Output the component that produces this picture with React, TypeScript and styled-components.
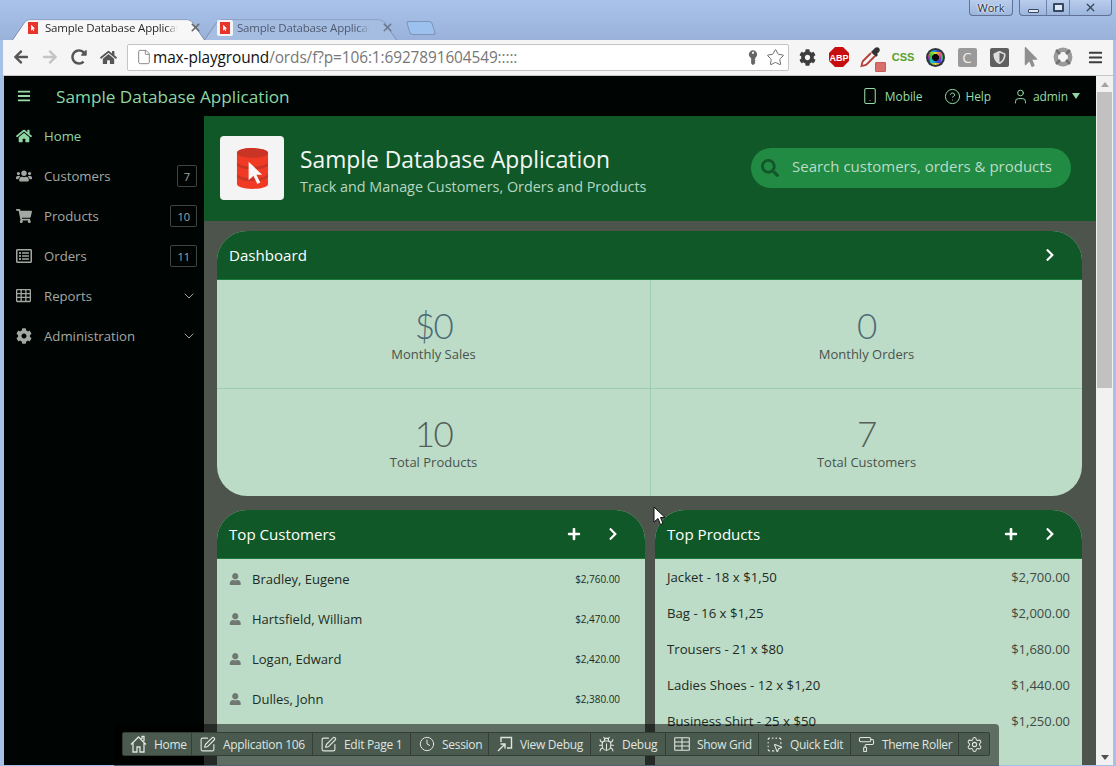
import React from 'react';
import styled, { createGlobalStyle } from 'styled-components';
import {
  FaArrowLeft, FaArrowRight, FaBars, FaChevronRight, FaCog, FaHome, FaKey, FaMousePointer,
  FaPlus, FaRedoAlt, FaRegListAlt, FaSearch, FaShieldAlt, FaShoppingCart, FaUser, FaUsers,
} from 'react-icons/fa';
import {
  Bug, ChevronDown, CircleHelp, Clock, File, PaintRoller, Settings, Smartphone,
  SquareDashedMousePointer, SquarePen, Star, User, X,
} from 'lucide-react';

const GlobalStyle = createGlobalStyle`
  html, body { margin: 0; padding: 0; overflow: hidden; background: #a7c1e6; }
  * { box-sizing: border-box; }
`;

const Frame = styled.div`
  position: relative;
  width: 1116px;
  height: 766px;
  overflow: hidden;
  display: flex;
  flex-direction: column;
  font-family: "Open Sans", "Noto Sans", sans-serif;
  background: #a7c1e6;
`;

/* browser chrome */
const TitleBar = styled.div`
  height: 40px;
  flex: none;
  display: flex;
  justify-content: space-between;
  padding: 0 4px 0 12px;
  background: linear-gradient(#a9c3ea, #9ab2da);
`;

const TabStrip = styled.div`
  display: flex;
  align-items: flex-end;
`;

const Tab = styled.div<{ $active?: boolean }>`
  position: relative;
  width: 193px;
  height: 25px;
  margin-right: -1px;
  padding: 0 3px 0 16px;
  display: flex;
  align-items: center;
  gap: 7px;
  font-size: 11.5px;
  letter-spacing: -0.2px;
  white-space: nowrap;
  z-index: ${(p) => (p.$active ? 2 : 1)};
  color: ${(p) => (p.$active ? '#2b2b2b' : '#4f5a70')};
  &::before {
    content: '';
    position: absolute;
    inset: 0;
    z-index: -1;
    border: 1px solid #7b8cab;
    border-bottom: none;
    border-radius: 5px 5px 0 0;
    background: ${(p) => (p.$active ? '#f7f7f7' : '#a6bde2')};
    transform: perspective(40px) rotateX(16deg);
    transform-origin: bottom;
  }
`;

const TabTitle = styled.span`
  flex: 1;
  -webkit-mask-image: linear-gradient(90deg, #000 88%, transparent 97%);
  mask-image: linear-gradient(90deg, #000 88%, transparent 97%);
`;

const Favicon = styled.span`
  width: 10px;
  height: 12px;
  flex: none;
  display: flex;
  align-items: center;
  justify-content: center;
  background: #e8352b;
  color: #fff;
  font-size: 6px;
`;

const FaviconBox = styled.span`
  width: 16px;
  height: 16px;
  margin: 0 -3px;
  flex: none;
  display: flex;
  align-items: center;
  justify-content: center;
  background: #f5f5f5;
  border-radius: 2px;
`;

const NewTab = styled.div`
  width: 26px;
  height: 14px;
  margin: 0 0 5px 12px;
  border: 1px solid #7f93b8;
  border-radius: 3px;
  background: #9cc1ee;
  transform: skewX(18deg);
`;

const WindowButtons = styled.div`
  display: flex;
  align-items: flex-start;
  gap: 6px;
`;

const CaptionGroup = styled.div`
  height: 16px;
  display: flex;
  border: 1px solid #5f7295;
  border-top: none;
  border-radius: 0 0 4px 4px;
  background: linear-gradient(#b9cdec, #9db6dd);
`;

const CaptionButton = styled.div<{ $width: number }>`
  width: ${(p) => p.$width}px;
  display: flex;
  align-items: center;
  justify-content: center;
  color: #1f2a3a;
  font-size: 11px;
  text-shadow: 0 0 2px #fff, 0 0 2px #fff;
  border-right: 1px solid #6f83a6;
  &:last-child { border-right: none; }
`;

const MinGlyph = styled.span`
  width: 11px;
  height: 4px;
  margin-top: 6px;
  border: 1px solid #384860;
  border-radius: 1px;
  background: #dfe8f5;
`;

const MaxGlyph = styled.span`
  width: 11px;
  height: 9px;
  border: 2px solid #384860;
  border-radius: 1px;
  background: #dfe8f5;
`;

const BrowserBar = styled.div`
  height: 36px;
  flex: none;
  display: flex;
  align-items: center;
  margin: 0 3px;
  padding: 0 0 1px;
  background: #f5f5f5;
  border-bottom: 1px solid #c8c8c8;
`;

const NavIcons = styled.div`
  width: 124px;
  flex: none;
  padding-left: 10px;
  display: flex;
  align-items: center;
  gap: 13px;
  color: #555;
  font-size: 16px;
`;

const FadedIcon = styled.span`
  display: flex;
  color: #c4c4c4;
`;

const Omnibox = styled.div`
  width: 662px;
  height: 27px;
  flex: none;
  padding: 0 3px 0 8px;
  display: flex;
  align-items: center;
  background: #fff;
  border: 1px solid #c4c4c4;
  border-radius: 2px;
  font-size: 15.4px;
  letter-spacing: -0.1px;
  color: #111;
`;

const UrlRest = styled.span`
  color: #777;
`;

const UrlIcon = styled.span`
  display: flex;
  color: #777;
  margin-right: 1px;
`;

const OmniEnd = styled.div`
  margin-left: auto;
  display: flex;
  align-items: center;
  gap: 7px;
  color: #666;
`;

const KeyIcon = styled.span`
  display: flex;
  transform: rotate(-45deg);
`;

const Extensions = styled.div`
  flex: 1;
  display: flex;
  align-items: center;
  padding-left: 2px;
`;

const Extension = styled.div`
  width: 32px;
  flex: none;
  height: 22px;
  position: relative;
  display: flex;
  align-items: center;
  justify-content: center;
  color: #3d3d3d;
`;

const CssLabel = styled.span`
  color: #58a02c;
  font-size: 11px;
  font-weight: 800;
  font-family: "Liberation Sans", sans-serif;
`;

const GreySquare = styled.span`
  width: 19px;
  height: 19px;
  display: flex;
  align-items: center;
  justify-content: center;
  background: #9a9a9a;
  border-radius: 2px;
  color: #eee;
  font-size: 15px;
`;

const DarkSquare = styled(GreySquare)`
  background: #5f5f5f;
`;

const ColorRing = styled.span`
  width: 19px;
  height: 19px;
  display: flex;
  align-items: center;
  justify-content: center;
  border-radius: 50%;
  background: #30343a;
  &::after {
    content: '';
    width: 11px;
    height: 11px;
    border-radius: 50%;
    border: 2.5px solid transparent;
    background: radial-gradient(#0a0a0a 45%, transparent 47%), conic-gradient(#e8e020, #e0309c, #3040d8, #20b8d8, #30c040, #e8e020);
  }
`;

const DropperBadge = styled.span`
  position: absolute;
  right: 1px;
  bottom: -4px;
  width: 11px;
  height: 10px;
  background: #d9706c;
  border: 1px solid #c45c58;
  border-radius: 1px;
`;

/* page */
const Page = styled.div`
  flex: 1;
  min-height: 0;
  margin: 0 3px 1px 4px;
  display: flex;
  flex-direction: column;
  background: #000402;
`;

const Header = styled.header`
  height: 40px;
  flex: none;
  display: flex;
  align-items: center;
  padding: 0 16px 0 13px;
  margin-right: 17px;
  color: #95dcaa;
`;

const Brand = styled.div`
  margin-left: 25px;
  font-size: 17.2px;
  flex: 1;
  color: #8fd6a3;
`;

const HeaderLink = styled.div<{ $gap: number; $left: number }>`
  margin-left: ${(p) => p.$left}px;
  display: flex;
  align-items: center;
  gap: ${(p) => p.$gap}px;
  font-size: 12px;
  font-weight: 500;
  letter-spacing: -0.1px;
`;

const Caret = styled.span`
  width: 0;
  height: 0;
  border-left: 4.5px solid transparent;
  border-right: 4.5px solid transparent;
  border-top: 6px solid #8fd6a3;
`;

const Columns = styled.div`
  flex: 1;
  min-height: 0;
  display: flex;
`;

const Sidebar = styled.nav`
  width: 200px;
  flex: none;
`;

const NavItem = styled.div<{ $active?: boolean }>`
  height: 40px;
  display: flex;
  align-items: center;
  padding: 0 7px 0 12px;
  font-size: 13.2px;
  color: ${(p) => (p.$active ? '#8fd6a3' : '#a3a8a4')};
  font-weight: ${(p) => (p.$active ? 500 : 400)};
`;

const NavIcon = styled.span`
  width: 28px;
  flex: none;
  display: flex;
  font-size: 16px;
`;

const NavLabel = styled.span`
  flex: 1;
`;

const Count = styled.span`
  min-width: 20px;
  height: 22px;
  padding: 0 6px;
  display: flex;
  align-items: center;
  justify-content: center;
  border: 1px solid #3f4541;
  border-radius: 2px;
  font-size: 11px;
`;

const Main = styled.main`
  flex: 1;
  min-width: 0;
  display: flex;
  flex-direction: column;
  overflow: hidden;
  background: #4d544c;
`;

const Hero = styled.section`
  height: 105px;
  flex: none;
  display: flex;
  align-items: center;
  padding: 0 25px 1px 16px;
  background: #115829;
`;

const LogoTile = styled.div`
  width: 64px;
  height: 64px;
  flex: none;
  display: flex;
  align-items: center;
  justify-content: center;
  background: #f4f4f4;
  border-radius: 4px;
`;

const HeroText = styled.div`
  flex: 1;
  margin-left: 16px;
  padding-top: 8px;
`;

const HeroTitle = styled.h1`
  margin: 0;
  font-size: 22.8px;
  line-height: 30px;
  font-weight: 400;
  color: #f2f7f3;
`;

const HeroSub = styled.div`
  font-size: 14.4px;
  line-height: 24px;
  color: #b5d6c1;
`;

const Search = styled.div`
  width: 320px;
  height: 40px;
  padding: 0 10px 4px;
  display: flex;
  align-items: center;
  gap: 13px;
  background: #218a43;
  border-radius: 20px;
  font-size: 15px;
  color: #bcdcc7;
`;

const SearchIcon = styled.span`
  display: flex;
  padding-top: 4px;
  font-size: 18px;
  color: #14562b;
`;

const Panels = styled.div`
  flex: 1;
  min-height: 0;
  padding: 10px 14px 0 13px;
  display: grid;
  grid-template-columns: 428px 427px;
  grid-template-rows: 265px 1fr;
  column-gap: 10px;
  row-gap: 14px;
`;

const Panel = styled.section<{ $wide?: boolean }>`
  grid-column: ${(p) => (p.$wide ? '1 / 3' : 'auto')};
  border-radius: ${(p) => (p.$wide ? '30px' : '30px 30px 0 0')};
  overflow: hidden;
  background: #bcdcc7;
`;

const PanelHeader = styled.div`
  height: 49px;
  display: flex;
  align-items: center;
  padding: 0 25px 0 12px;
  background: #115829;
  border-bottom: 1px solid #1b7a3c;
  color: #fff;
  font-size: 15.1px;
`;

const PanelTitle = styled.span`
  flex: 1;
`;

const PanelAction = styled.span`
  margin-left: 25px;
  display: flex;
  font-size: 14px;
`;

const StatGrid = styled.div`
  display: grid;
  grid-template-columns: 434px 1fr;
  grid-template-rows: 109px 108px;
`;

const Stat = styled.div<{ $col: number; $row: number }>`
  display: flex;
  flex-direction: column;
  align-items: center;
  padding-top: ${(p) => (p.$row === 0 ? 25 : 24)}px;
  border-right: ${(p) => (p.$col === 0 ? '1px solid #9dcdaf' : 'none')};
  border-bottom: ${(p) => (p.$row === 0 ? '1px solid #9dcdaf' : 'none')};
`;

const StatValue = styled.div<{ $blue?: boolean }>`
  font-family: Lato, "Open Sans", sans-serif;
  font-weight: 300;
  font-size: 35px;
  letter-spacing: -1.5px;
  line-height: 41px;
  color: ${(p) => (p.$blue ? '#4c6a76' : '#555e58')};
`;

const StatLabel = styled.div`
  font-size: 13px;
  line-height: 16px;
  color: #4a524c;
`;

const CustomerRow = styled.div`
  height: 40px;
  padding: 0 25px 0 12px;
  display: flex;
  align-items: center;
  color: #1e2a24;
  font-size: 13px;
`;

const PersonIcon = styled.span`
  width: 23px;
  flex: none;
  display: flex;
  color: #707873;
  font-size: 12.5px;
`;

const RowName = styled.span`
  flex: 1;
`;

const SmallAmount = styled.span`
  font-size: 10px;
  letter-spacing: -0.05px;
`;

const ProductRow = styled.div`
  height: 36px;
  padding: 0 12px;
  display: flex;
  align-items: center;
  justify-content: space-between;
  color: #1e2a24;
  font-size: 13.2px;
`;

const Amount = styled.span`
  color: #3f4a44;
  font-size: 13px;
`;

const ScrollBar = styled.div`
  width: 17px;
  flex: none;
  display: flex;
  flex-direction: column;
  align-items: center;
  background: #f1f1f1;
  margin-top: -40px;
`;

const ScrollArrow = styled.div<{ $down?: boolean }>`
  height: 16px;
  flex: none;
  display: flex;
  align-items: center;
  &::after {
    content: '';
    border-left: 4px solid transparent;
    border-right: 4px solid transparent;
    ${(p) => (p.$down ? 'border-top: 5px solid #505050;' : 'border-bottom: 5px solid #a3a3a3;')}
  }
`;

const ScrollThumb = styled.div`
  width: 15px;
  height: 296px;
  flex: none;
  background: #c1c1c1;
`;

const ScrollGap = styled.div`
  flex: 1;
`;

/* developer toolbar floats over the page */
const DevBacking = styled.div`
  position: absolute;
  left: 114px;
  bottom: 0;
  width: 885px;
  height: 42px;
  padding: 8px 0 0 8px;
  background: rgba(0, 0, 0, 0.5);
  border-radius: 4px 4px 0 0;
`;

const DevToolbar = styled.div`
  display: flex;
  height: 24px;
  width: fit-content;
  background: #4a5a4e;
  border: 1px solid #353d37;
  border-radius: 2px;
`;

const DevButton = styled.div<{ $width: number }>`
  width: ${(p) => p.$width}px;
  height: 100%;
  padding: 0 0 0 7px;
  display: flex;
  align-items: center;
  gap: 7px;
  border-right: 1px solid #353d37;
  color: #dfe5e0;
  font-size: 12px;
  letter-spacing: -0.3px;
  white-space: nowrap;
  &:last-child { border-right: none; }
`;

const DevIcon = styled.span`
  width: 17px;
  flex: none;
  display: flex;
  justify-content: center;
`;

const Pointer = styled.svg`
  position: absolute;
  left: 653px;
  top: 506px;
`;

const GridIcon: React.FC<{ size: number; solid?: boolean }> = ({ size, solid }) => (
  <svg width={size} height={size * 0.875} viewBox="0 0 16 14" fill="none" stroke="currentColor" strokeWidth={solid ? 1.4 : 1.1}>
    <rect x=".7" y=".7" width="14.6" height="12.6" rx=".5" />
    <path d={solid ? 'M5.5 1v12M10.5 1v12M1 5h14M1 9h14' : 'M8 1v12M1 5h14M1 9h14'} />
  </svg>
);

const DevHomeIcon = () => (
  <svg width="17" height="18" viewBox="0 0 17 18" fill="none" stroke="currentColor" strokeWidth="1.3">
    <path d="M1 9.5 8.5 2 16 9.5M3 8v9h4v-5h3v5h4V8M12 4V1.5h2V6" />
  </svg>
);

const ViewDebugIcon = () => (
  <svg width="16" height="16" viewBox="0 0 16 16" fill="none" stroke="currentColor" strokeWidth="1.4">
    <path d="M4 6V1.5h10.5V12H10M1 15l7-7M3.5 8H8v4.5" />
  </svg>
);

const navItems = [
  { label: 'Home', icon: <FaHome />, active: true },
  { label: 'Customers', icon: <FaUsers />, count: 7 },
  { label: 'Products', icon: <FaShoppingCart />, count: 10 },
  { label: 'Orders', icon: <FaRegListAlt />, count: 11 },
  { label: 'Reports', icon: <GridIcon size={15} solid />, expand: true },
  { label: 'Administration', icon: <FaCog />, expand: true },
];

const stats = [
  { value: '$0', label: 'Monthly Sales', col: 0, row: 0, blue: true },
  { value: '0', label: 'Monthly Orders', col: 1, row: 0, blue: true },
  { value: '10', label: 'Total Products', col: 0, row: 1 },
  { value: '7', label: 'Total Customers', col: 1, row: 1 },
];

const customers = [
  ['Bradley, Eugene', '$2,760.00'],
  ['Hartsfield, William', '$2,470.00'],
  ['Logan, Edward', '$2,420.00'],
  ['Dulles, John', '$2,380.00'],
];

const products = [
  ['Jacket - 18 x $1,50', '$2,700.00'],
  ['Bag - 16 x $1,25', '$2,000.00'],
  ['Trousers - 21 x $80', '$1,680.00'],
  ['Ladies Shoes - 12 x $1,20', '$1,440.00'],
  ['Business Shirt - 25 x $50', '$1,250.00'],
];

const devButtons = [
  { label: 'Home', width: 69, icon: <DevHomeIcon /> },
  { label: 'Application 106', width: 121, icon: <SquarePen size={17} strokeWidth={1.6} /> },
  { label: 'Edit Page 1', width: 98, icon: <SquarePen size={17} strokeWidth={1.6} /> },
  { label: 'Session', width: 78, icon: <Clock size={16} strokeWidth={1.5} /> },
  { label: 'View Debug', width: 102, icon: <ViewDebugIcon /> },
  { label: 'Debug', width: 75, icon: <Bug size={17} strokeWidth={1.5} /> },
  { label: 'Show Grid', width: 93, icon: <GridIcon size={16} /> },
  { label: 'Quick Edit', width: 92, icon: <SquareDashedMousePointer size={17} strokeWidth={1.5} /> },
  { label: 'Theme Roller', width: 108, icon: <PaintRoller size={17} strokeWidth={1.5} /> },
  { label: '', width: 30, icon: <Settings size={17} strokeWidth={1.5} /> },
];

const DatabaseLogo = () => (
  <svg width="33" height="41" viewBox="0 0 34 42">
    <path d="M1 5c0-3 7-5 16-5s16 2 16 5v32c0 3-7 5-16 5S1 40 1 37z" fill="#f03a24" />
    <ellipse cx="17" cy="5" rx="16" ry="5" fill="#c93424" />
    <path d="M1 15c3 3 9 4 16 4s13-1 16-4v3c-3 3-9 4-16 4S4 21 1 18zM1 27c3 3 9 4 16 4s13-1 16-4v3c-3 3-9 4-16 4S4 33 1 30z" fill="#c93424" />
    <path d="M13 14v19l5-4.500 4 8.500 3-1.500-4-8h6z" fill="#f7f7f7" />
  </svg>
);

const AbpIcon = () => (
  <svg width="20" height="20" viewBox="0 0 20 20">
    <path d="M6 0h8l6 6v8l-6 6H6l-6-6V6z" fill="#c70d0d" />
    <text x="10" y="13.500" textAnchor="middle" fontSize="9" fontWeight="700" fill="#fff" fontFamily="Liberation Sans">ABP</text>
  </svg>
);

const DropperIcon = () => (
  <svg width="22" height="22" viewBox="0 0 22 22" fill="none">
    <path d="M13 4l2-2c1-1 3-1 4 0s1 3 0 4l-2 2 1 1-2 2-5-5 2-2z" fill="#333" />
    <path d="M11 7 3 15c-1 1-1 3-1.500 5 2-.5 4-.5 5-1.500L15 10" stroke="#b5403a" strokeWidth="1.800" />
  </svg>
);

const Lifebuoy = () => (
  <svg width="20" height="20" viewBox="0 0 20 20">
    <circle cx="10" cy="10" r="7.200" fill="none" stroke="#9a9a9a" strokeWidth="4.500" />
    <path d="M3 3l4 4M17 3l-4 4M3 17l4-4M17 17l-4-4" stroke="#707070" strokeWidth="2.500" />
  </svg>
);

const App: React.FC = () => (
  <Frame>
    <GlobalStyle />
    <TitleBar>
      <TabStrip>
        <Tab $active>
          <Favicon><FaMousePointer /></Favicon>
          <TabTitle>Sample Database Applicat</TabTitle>
          <X size={13} strokeWidth={3} color="#666" />
        </Tab>
        <Tab>
          <FaviconBox><Favicon><FaMousePointer /></Favicon></FaviconBox>
          <TabTitle>Sample Database Applicat</TabTitle>
          <X size={13} strokeWidth={3} color="#6d7a90" />
        </Tab>
        <NewTab />
      </TabStrip>
      <WindowButtons>
        <CaptionGroup>
          <CaptionButton $width={42}>Work</CaptionButton>
        </CaptionGroup>
        <CaptionGroup>
          <CaptionButton $width={27}><MinGlyph /></CaptionButton>
          <CaptionButton $width={23}><MaxGlyph /></CaptionButton>
          <CaptionButton $width={41}><X size={13} strokeWidth={2.5} color="#384860" /></CaptionButton>
        </CaptionGroup>
      </WindowButtons>
    </TitleBar>

    <BrowserBar>
      <NavIcons>
        <FaArrowLeft />
        <FadedIcon><FaArrowRight /></FadedIcon>
        <FaRedoAlt />
        <FaHome size={17} />
      </NavIcons>
      <Omnibox>
        <UrlIcon><File size={16} strokeWidth={1.3} /></UrlIcon>
        max-playground<UrlRest>/ords/f?p=106:1:6927891604549:::::</UrlRest>
        <OmniEnd>
          <KeyIcon><FaKey size={12} /></KeyIcon>
          <Star size={19} strokeWidth={1.2} />
        </OmniEnd>
      </Omnibox>
      <Extensions>
        <Extension><FaCog size={17} /></Extension>
        <Extension><AbpIcon /></Extension>
        <Extension><DropperIcon /><DropperBadge /></Extension>
        <Extension><CssLabel>CSS</CssLabel></Extension>
        <Extension><ColorRing /></Extension>
        <Extension><GreySquare>C</GreySquare></Extension>
        <Extension><DarkSquare><FaShieldAlt size={13} color="#ddd" /></DarkSquare></Extension>
        <Extension><FaMousePointer size={20} color="#8f8f8f" /></Extension>
        <Extension><Lifebuoy /></Extension>
        <Extension><FaBars size={15} /></Extension>
      </Extensions>
    </BrowserBar>

    <Page>
      <Header>
        <FaBars size={14} />
        <Brand>Sample Database Application</Brand>
        <HeaderLink $gap={6} $left={0}><Smartphone size={18} strokeWidth={1.4} />Mobile</HeaderLink>
        <HeaderLink $gap={4} $left={22}><CircleHelp size={17} strokeWidth={1.4} />Help</HeaderLink>
        <HeaderLink $gap={4} $left={21}><User size={17} strokeWidth={1.4} />admin<Caret /></HeaderLink>
      </Header>
      <Columns>
        <Sidebar>
          {navItems.map((item) => (
            <NavItem key={item.label} $active={item.active}>
              <NavIcon>{item.icon}</NavIcon>
              <NavLabel>{item.label}</NavLabel>
              {item.count !== undefined && <Count>{item.count}</Count>}
              {item.expand && <ChevronDown size={16} strokeWidth={1.5} />}
            </NavItem>
          ))}
        </Sidebar>
        <Main>
          <Hero>
            <LogoTile><DatabaseLogo /></LogoTile>
            <HeroText>
              <HeroTitle>Sample Database Application</HeroTitle>
              <HeroSub>Track and Manage Customers, Orders and Products</HeroSub>
            </HeroText>
            <Search>
              <SearchIcon><FaSearch /></SearchIcon>
              Search customers, orders &amp; products
            </Search>
          </Hero>
          <Panels>
            <Panel $wide>
              <PanelHeader>
                <PanelTitle>Dashboard</PanelTitle>
                <PanelAction><FaChevronRight /></PanelAction>
              </PanelHeader>
              <StatGrid>
                {stats.map((s) => (
                  <Stat key={s.label} $col={s.col} $row={s.row}>
                    <StatValue $blue={s.blue}>{s.value}</StatValue>
                    <StatLabel>{s.label}</StatLabel>
                  </Stat>
                ))}
              </StatGrid>
            </Panel>
            <Panel>
              <PanelHeader>
                <PanelTitle>Top Customers</PanelTitle>
                <PanelAction><FaPlus /></PanelAction>
                <PanelAction><FaChevronRight /></PanelAction>
              </PanelHeader>
              {customers.map(([name, amount]) => (
                <CustomerRow key={name}>
                  <PersonIcon><FaUser /></PersonIcon>
                  <RowName>{name}</RowName>
                  <SmallAmount>{amount}</SmallAmount>
                </CustomerRow>
              ))}
            </Panel>
            <Panel>
              <PanelHeader>
                <PanelTitle>Top Products</PanelTitle>
                <PanelAction><FaPlus /></PanelAction>
                <PanelAction><FaChevronRight /></PanelAction>
              </PanelHeader>
              {products.map(([name, amount]) => (
                <ProductRow key={name}>
                  <span>{name}</span>
                  <Amount>{amount}</Amount>
                </ProductRow>
              ))}
            </Panel>
          </Panels>
        </Main>
        <ScrollBar>
          <ScrollArrow />
          <ScrollThumb />
          <ScrollGap />
          <ScrollArrow $down />
        </ScrollBar>
      </Columns>
    </Page>

    <DevBacking>
      <DevToolbar>
        {devButtons.map((b) => (
          <DevButton key={b.label + b.width} $width={b.width}>
            <DevIcon>{b.icon}</DevIcon>
            {b.label && <span>{b.label}</span>}
          </DevButton>
        ))}
      </DevToolbar>
    </DevBacking>

    <Pointer width="13" height="20" viewBox="0 0 13 20">
      <path d="M1 1v15l4-3.500 2.500 6 2.500-1-2.500-6H12z" fill="#fff" stroke="#111" strokeWidth="1" />
    </Pointer>
  </Frame>
);

export default App;
